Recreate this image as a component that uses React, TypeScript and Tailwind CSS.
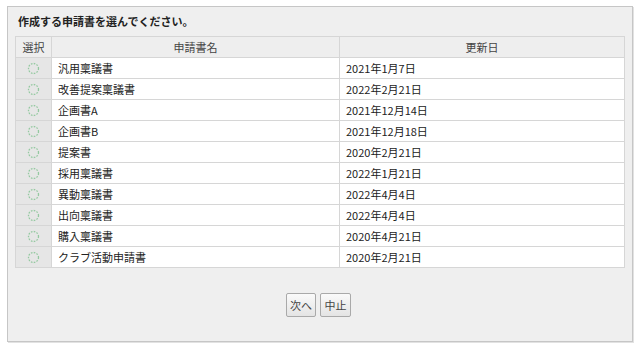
const rows = [
  { name: "汎用稟議書", date: "2021年1月7日" },
  { name: "改善提案稟議書", date: "2022年2月21日" },
  { name: "企画書A", date: "2021年12月14日" },
  { name: "企画書B", date: "2021年12月18日" },
  { name: "提案書", date: "2020年2月21日" },
  { name: "採用稟議書", date: "2022年1月21日" },
  { name: "異動稟議書", date: "2022年4月4日" },
  { name: "出向稟議書", date: "2022年4月4日" },
  { name: "購入稟議書", date: "2020年4月21日" },
  { name: "クラブ活動申請書", date: "2020年2月21日" },
];

const Radio = () => (
  <svg width="13" height="13" viewBox="0 0 13 13" className="mx-auto block">
    <circle
      cx="6.5"
      cy="6.5"
      r="5"
      fill="none"
      stroke="#94c9a0"
      strokeWidth="1.3"
      strokeDasharray="1.6 1.3"
    />
  </svg>
);

const App = () => {
  return (
    <div
      className="w-[640px] h-[347px] bg-white pt-[6px] pl-[7px]"
      style={{ fontFamily: '"Noto Sans CJK JP", "Noto Sans", sans-serif' }}
    >
      <div className="w-[626px] h-[336px] bg-[#efefef] border border-[#c6c6c6] shadow-[1px_1px_0_#e2e2e2] flex flex-col px-[7px]">
        <div className="h-[29px] pt-[6px] pl-[3px] text-[11px] font-bold text-[#222] leading-[16px]">
          作成する申請書を選んでください。
        </div>
        <table className="w-[610px] border-collapse text-[11px] text-[#222] bg-white">
          <thead>
            <tr className="h-[21px] bg-[#eeeeee]">
              <th className="w-[36px] border border-[#d6d6d6] font-normal text-[#444]">
                選択
              </th>
              <th className="w-[288px] border border-[#d6d6d6] font-normal text-[#444]">
                申請書名
              </th>
              <th className="border border-[#d6d6d6] font-normal text-[#444]">
                更新日
              </th>
            </tr>
          </thead>
          <tbody>
            {rows.map((r) => (
              <tr key={r.name} className="h-[21px]">
                <td className="border border-[#d6d6d6] bg-[#e6e6e6]">
                  <Radio />
                </td>
                <td className="border border-[#d6d6d6] pl-[6px]">{r.name}</td>
                <td className="border border-[#d6d6d6] pl-[6px]">{r.date}</td>
              </tr>
            ))}
          </tbody>
        </table>
        <div className="flex justify-center gap-[4px] mt-[25px] pr-[3px]">
          <button className="w-[30px] h-[24px] text-[11px] text-[#444] border border-[#a9a9a9] rounded-[2px] bg-gradient-to-b from-[#fafafa] to-[#e4e4e4]">
            次へ
          </button>
          <button className="w-[31px] h-[24px] text-[11px] text-[#444] border border-[#a9a9a9] rounded-[2px] bg-gradient-to-b from-[#fafafa] to-[#e4e4e4]">
            中止
          </button>
        </div>
      </div>
    </div>
  );
};

export default App;
